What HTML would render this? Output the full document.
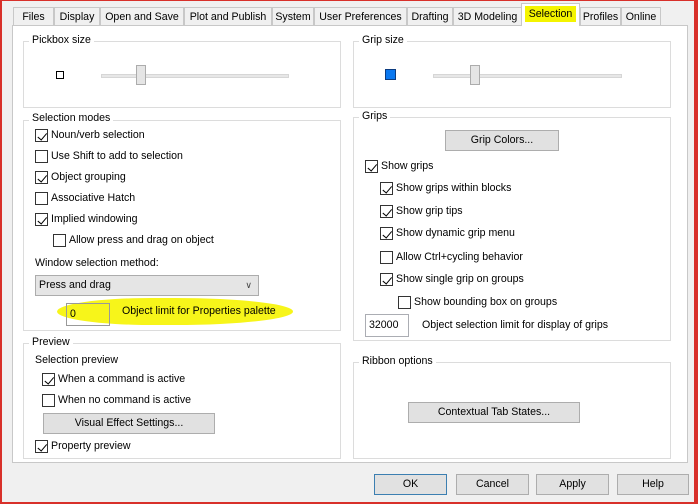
<!DOCTYPE html>
<html><head><style>
*{box-sizing:border-box;margin:0;padding:0}
body{width:698px;height:504px;background:#f0f0f0;position:relative;overflow:hidden;font-family:"Liberation Sans",sans-serif;font-size:10.6px;color:#000}
.a{position:absolute;white-space:nowrap;line-height:15px}
.frame{position:absolute;left:0;top:0;width:698px;height:504px;border:2px solid #d8302a;border-top:1px solid #d8302a;border-left:2px solid #d8302a;border-right:4px solid #d8302a;pointer-events:none}
.tab{position:absolute;top:7px;height:19px;background:#f0f0f0;border:1px solid #c8c8c8;border-bottom:none;text-align:center;line-height:18px}
.panel{position:absolute;left:12px;top:25px;width:676px;height:438px;background:#fff;border:1px solid #c8c8c8}
.grp{position:absolute;border:1px solid #dcdcdc}
.lg{position:absolute;background:#fff;padding:0 3px;line-height:13px}
.cb{position:absolute;width:13px;height:13px;border:1px solid #333;background:#fff}
.cb.c::after{content:"";position:absolute;left:3.5px;top:0.5px;width:3.5px;height:7.5px;border:solid #000;border-width:0 1.7px 1.7px 0;transform:rotate(40deg)}
.btn{position:absolute;height:21px;background:#e1e1e1;border:1px solid #adadad;text-align:center;line-height:19px}
.inp{position:absolute;border:1px solid #abadb3;background:#fff;padding-left:3px;line-height:20px}
</style></head><body>
<div class="tab" style="left:13px;width:41px">Files</div>
<div class="tab" style="left:54px;width:46px">Display</div>
<div class="tab" style="left:100px;width:84px">Open and Save</div>
<div class="tab" style="left:184px;width:88px">Plot and Publish</div>
<div class="tab" style="left:272px;width:42px">System</div>
<div class="tab" style="left:314px;width:93px">User Preferences</div>
<div class="tab" style="left:407px;width:46px">Drafting</div>
<div class="tab" style="left:453px;width:69px">3D Modeling</div>
<div class="tab" style="left:621px;width:40px">Online</div>
<div class="tab" style="left:580px;width:41px">Profiles</div>
<div class="panel"></div>
<div class="tab" style="left:521px;top:3px;height:23px;width:59px;background:#fff;z-index:2;line-height:21px"><span style="background:#f4f400;padding:2px 4px">Selection</span></div>

<!-- Pickbox -->
<div class="grp" style="left:23px;top:41px;width:318px;height:67px"></div>
<div class="lg a" style="left:29px;top:34px">Pickbox size</div>
<div class="a" style="left:56px;top:71px;width:8px;height:8px;border:1px solid #000"></div>
<div class="a" style="left:101px;top:74px;width:188px;height:4px;background:#e7e7e7;border:1px solid #d6d6d6"></div>
<div class="a" style="left:136px;top:65px;width:10px;height:20px;background:#e5e5e5;border:1px solid #acacac"></div>

<!-- Selection modes -->
<div class="grp" style="left:23px;top:120px;width:318px;height:211px"></div>
<div class="lg a" style="left:29px;top:112px">Selection modes</div>
<div class="cb c" style="left:35px;top:129px"></div><div class="a" style="left:51px;top:128px">Noun/verb selection</div>
<div class="cb" style="left:35px;top:150px"></div><div class="a" style="left:51px;top:149px">Use Shift to add to selection</div>
<div class="cb c" style="left:35px;top:171px"></div><div class="a" style="left:51px;top:170px">Object grouping</div>
<div class="cb" style="left:35px;top:192px"></div><div class="a" style="left:51px;top:191px">Associative Hatch</div>
<div class="cb c" style="left:35px;top:213px"></div><div class="a" style="left:51px;top:212px">Implied windowing</div>
<div class="cb" style="left:53px;top:234px"></div><div class="a" style="left:69px;top:233px">Allow press and drag on object</div>
<div class="a" style="left:35px;top:256px">Window selection method:</div>
<div class="a" style="left:35px;top:275px;width:224px;height:21px;background:#e5e5e5;border:1px solid #acacac;padding-left:3px;line-height:19px">Press and drag<span style="position:absolute;right:6px;top:0;font-size:9px;color:#444">&#8744;</span></div>
<div class="a" style="left:57px;top:298px;width:236px;height:27px;background:#f7f51a;border-radius:40% 50% 50% 40%/50%"></div>
<div class="inp a" style="left:66px;top:303px;width:44px;height:23px;border-color:#999;background:transparent">0</div>
<div class="a" style="left:122px;top:304px">Object limit for Properties palette</div>

<!-- Preview -->
<div class="grp" style="left:23px;top:343px;width:318px;height:116px"></div>
<div class="lg a" style="left:29px;top:336px">Preview</div>
<div class="a" style="left:35px;top:353px">Selection preview</div>
<div class="cb c" style="left:42px;top:373px"></div><div class="a" style="left:58px;top:372px">When a command is active</div>
<div class="cb" style="left:42px;top:394px"></div><div class="a" style="left:58px;top:393px">When no command is active</div>
<div class="btn" style="left:43px;top:413px;width:172px">Visual Effect Settings...</div>
<div class="cb c" style="left:35px;top:440px"></div><div class="a" style="left:51px;top:439px">Property preview</div>

<!-- Grip size -->
<div class="grp" style="left:353px;top:41px;width:318px;height:67px"></div>
<div class="lg a" style="left:359px;top:34px">Grip size</div>
<div class="a" style="left:385px;top:69px;width:11px;height:11px;background:#0a78f0;border:1px solid #0c3c80"></div>
<div class="a" style="left:433px;top:74px;width:189px;height:4px;background:#e7e7e7;border:1px solid #d6d6d6"></div>
<div class="a" style="left:470px;top:65px;width:10px;height:20px;background:#e5e5e5;border:1px solid #acacac"></div>

<!-- Grips -->
<div class="grp" style="left:353px;top:117px;width:318px;height:224px"></div>
<div class="lg a" style="left:359px;top:110px">Grips</div>
<div class="btn" style="left:445px;top:130px;width:114px">Grip Colors...</div>
<div class="cb c" style="left:365px;top:160px"></div><div class="a" style="left:381px;top:159px">Show grips</div>
<div class="cb c" style="left:380px;top:182px"></div><div class="a" style="left:396px;top:181px">Show grips within blocks</div>
<div class="cb c" style="left:380px;top:205px"></div><div class="a" style="left:396px;top:204px">Show grip tips</div>
<div class="cb c" style="left:380px;top:227px"></div><div class="a" style="left:396px;top:226px">Show dynamic grip menu</div>
<div class="cb" style="left:380px;top:251px"></div><div class="a" style="left:396px;top:250px">Allow Ctrl+cycling behavior</div>
<div class="cb c" style="left:380px;top:273px"></div><div class="a" style="left:396px;top:272px">Show single grip on groups</div>
<div class="cb" style="left:398px;top:296px"></div><div class="a" style="left:414px;top:295px">Show bounding box on groups</div>
<div class="inp a" style="left:365px;top:314px;width:44px;height:23px">32000</div>
<div class="a" style="left:422px;top:318px">Object selection limit for display of grips</div>

<!-- Ribbon -->
<div class="grp" style="left:353px;top:362px;width:318px;height:97px"></div>
<div class="lg a" style="left:359px;top:355px">Ribbon options</div>
<div class="btn" style="left:408px;top:402px;width:172px">Contextual Tab States...</div>

<!-- Bottom buttons -->
<div class="btn" style="left:374px;top:474px;width:73px;border-color:#3c7fb1">OK</div>
<div class="btn" style="left:456px;top:474px;width:73px">Cancel</div>
<div class="btn" style="left:536px;top:474px;width:73px">Apply</div>
<div class="btn" style="left:617px;top:474px;width:72px">Help</div>
<div class="frame"></div>
</body></html>
